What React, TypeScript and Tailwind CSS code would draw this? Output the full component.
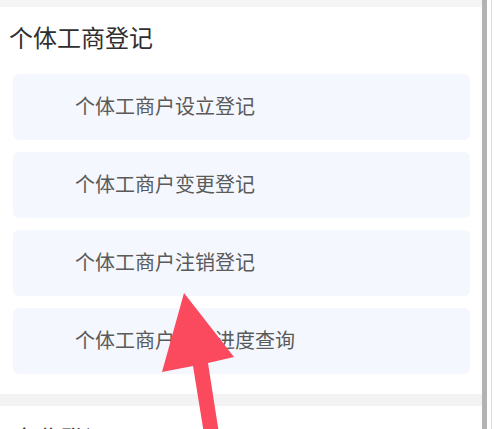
const ITEMS = [
  "个体工商户设立登记",
  "个体工商户变更登记",
  "个体工商户注销登记",
  "个体工商户登记进度查询",
];

export default function App() {
  return (
    <div
      className="relative h-[429px] w-full overflow-hidden bg-[#f5f5f6]"
      style={{ fontFamily: '"Noto Sans", "Noto Sans CJK SC", sans-serif' }}
    >
      <div className="flex h-full">
        <div className="flex w-[482px] flex-col">
          <div className="h-[7px] shrink-0 bg-[#f5f5f6]" />
          <section className="flex flex-col bg-white pt-[15px] pb-[20px]">
            <h2 className="pl-[9px] text-[24px] leading-[32px] font-normal text-[#2f2f2f]">
              个体工商登记
            </h2>
            <div className="mt-[20px] flex flex-col gap-[12px] pl-[13px] pr-[12px]">
              {ITEMS.map((label) => (
                <button
                  key={label}
                  type="button"
                  className="flex h-[66px] items-center rounded-[6px] bg-[#f4f7fd] pl-[62px] text-left text-[20px] text-[#5a5a5a]"
                >
                  {label}
                </button>
              ))}
            </div>
          </section>
          <div className="h-[12px] shrink-0 bg-[#f3f3f4]" />
          <section className="flex-1 bg-white pt-[17px]">
            <h2 className="pl-[12px] text-[24px] leading-[32px] text-[#2f2f2f]">企业登记</h2>
          </section>
        </div>
        <div className="w-[5px] bg-[#b3b3b3]" />
        <div className="w-[4px] bg-white" />
        <div className="w-[1px] bg-[#dcdcdc]" />
        <div className="flex-1 bg-white" />
      </div>

      {/* pointer arrow drawn over the list */}
      <svg
        className="pointer-events-none absolute inset-0"
        width="495"
        height="429"
        viewBox="0 0 495 429"
      >
        <polygon
          points="184,293 234,357 208,363 220,440 205,440 193,366 162,372"
          fill="#fb4a5e"
        />
      </svg>
    </div>
  );
}
